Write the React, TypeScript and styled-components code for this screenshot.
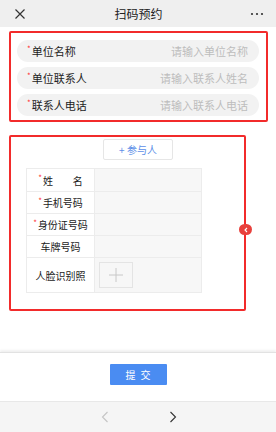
import React from "react";
import styled, { createGlobalStyle } from "styled-components";

const Global = createGlobalStyle`
  html, body { margin: 0; padding: 0; background: #fff; }
  body { font-family: "Noto Sans CJK SC", "Noto Sans", sans-serif; color: #333; }
  * { box-sizing: border-box; }
`;

const Page = styled.div`
  width: 276px;
  height: 432px;
  display: flex;
  flex-direction: column;
  overflow: hidden;
  background: #fff;
`;

const Header = styled.div`
  height: 27px;
  flex: none;
  background: #efefef;
  display: flex;
  align-items: center;
  justify-content: space-between;
  padding: 0 12px 0 13px;
`;

const Title = styled.div`
  font-size: 12px;
  color: #222;
  line-height: 1;
`;

const IconBox = styled.div`
  width: 14px;
  height: 14px;
  display: flex;
  align-items: center;
  justify-content: center;
`;

const Content = styled.div`
  flex: 1;
  display: flex;
  flex-direction: column;
  padding: 4px 8px 0 9px;
`;

const RedFrame = styled.div<{ $w: number }>`
  position: relative;
  width: ${(p) => p.$w}px;
  border: 2px solid #f22b2b;
  border-radius: 2px;
`;

const InfoFrame = styled(RedFrame)`
  height: 91px;
  padding: 7px 7px 0 6px;
  display: flex;
  flex-direction: column;
  gap: 5px;
`;

const Pill = styled.div`
  height: 22px;
  border-radius: 11px;
  background: #f2f2f2;
  display: flex;
  align-items: center;
  justify-content: space-between;
  padding: 0 11px 0 10px;
  font-size: 11px;
`;

const Label = styled.span`
  color: #222;
  display: flex;
  align-items: center;
`;

const Star = styled.span`
  color: #f33;
  font-size: 8px;
  line-height: 1;
  margin-right: 1px;
  position: relative;
  top: -2px;
`;

const Placeholder = styled.span`
  color: #bdbdbd;
`;

const PeopleFrame = styled(RedFrame)`
  margin-top: 13px;
  height: 176px;
  padding: 2px 0 0 15px;
  display: flex;
  flex-direction: column;
`;

const AddButton = styled.div`
  align-self: flex-start;
  margin-left: 77px;
  width: 70px;
  height: 21px;
  border: 1px solid #e6e6e6;
  border-radius: 2px;
  display: flex;
  align-items: center;
  justify-content: center;
  font-size: 10px;
  color: #5d8fe8;
  background: #fff;
`;

const Table = styled.div`
  margin-top: 8px;
  width: 176px;
  display: grid;
  grid-template-columns: 67px 1fr;
  border: 1px solid #ececec;
`;

const Cell = styled.div<{ $h: number; $value?: boolean; $last?: boolean }>`
  height: ${(p) => p.$h}px;
  background: ${(p) => (p.$value ? "#f7f7f7" : "#fff")};
  border-bottom: ${(p) => (p.$last ? "none" : "1px solid #ececec")};
  border-left: ${(p) => (p.$value ? "1px solid #ececec" : "none")};
  display: flex;
  align-items: center;
  justify-content: ${(p) => (p.$value ? "flex-start" : "center")};
  padding-left: ${(p) => (p.$value ? "4px" : "0")};
  font-size: 10px;
  color: #333;
`;

const UploadBox = styled.div`
  width: 34px;
  height: 26px;
  border: 1px solid #e4e4e4;
  display: flex;
  align-items: center;
  justify-content: center;
`;

const SideDot = styled.div`
  position: absolute;
  right: -8px;
  top: 87px;
  width: 13px;
  height: 11px;
  border-radius: 6px;
  background: #e8403c;
  display: flex;
  align-items: center;
  justify-content: center;
`;

const Footer = styled.div`
  height: 49px;
  flex: none;
  display: flex;
  align-items: flex-start;
  justify-content: center;
  padding-top: 11px;
  border-top: 1px solid #e2e2e2;
  box-shadow: 0 -2px 2px rgba(0, 0, 0, 0.06);
  background: #fff;
`;

const SubmitButton = styled.div`
  width: 57px;
  height: 21px;
  background: #4a8cf2;
  border-radius: 1px;
  color: #fff;
  font-size: 10px;
  letter-spacing: 5px;
  padding-left: 5px;
  display: flex;
  align-items: center;
  justify-content: center;
`;

const NavBar = styled.div`
  height: 31px;
  flex: none;
  background: #f5f5f5;
  border-top: 1px solid #e8e8e8;
  display: flex;
  align-items: center;
  justify-content: center;
  gap: 60px;
  padding-left: 2px;
`;

const rows: { label: string; star?: boolean; h: number }[] = [
  { label: "姓\u3000\u3000名", star: true, h: 23 },
  { label: "手机号码", star: true, h: 22 },
  { label: "身份证号码", star: true, h: 22 },
  { label: "车牌号码", h: 22 },
];

export default function App() {
  return (
    <Page>
      <Global />
      <Header>
        <IconBox>
          <svg width="12" height="12" viewBox="0 0 12 12">
            <path d="M1.5 1.5 L10.5 10.5 M10.5 1.5 L1.5 10.5" stroke="#333" strokeWidth="1.2" />
          </svg>
        </IconBox>
        <Title>扫码预约</Title>
        <IconBox>
          <svg width="14" height="4" viewBox="0 0 14 4">
            <circle cx="2" cy="2" r="1.1" fill="#333" />
            <circle cx="7" cy="2" r="1.1" fill="#333" />
            <circle cx="12" cy="2" r="1.1" fill="#333" />
          </svg>
        </IconBox>
      </Header>
      <Content>
        <InfoFrame $w={259}>
          <Pill>
            <Label><Star>*</Star>单位名称</Label>
            <Placeholder>请输入单位名称</Placeholder>
          </Pill>
          <Pill>
            <Label><Star>*</Star>单位联系人</Label>
            <Placeholder>请输入联系人姓名</Placeholder>
          </Pill>
          <Pill>
            <Label><Star>*</Star>联系人电话</Label>
            <Placeholder>请输入联系人电话</Placeholder>
          </Pill>
        </InfoFrame>
        <PeopleFrame $w={237}>
          <AddButton>+ 参与人</AddButton>
          <Table>
            {rows.map((r) => (
              <React.Fragment key={r.label}>
                <Cell $h={r.h}>
                  <Label>
                    {r.star && <Star>*</Star>}
                    {r.label}
                  </Label>
                </Cell>
                <Cell $h={r.h} $value />
              </React.Fragment>
            ))}
            <Cell $h={34} $last>
              <Label>人脸识别照</Label>
            </Cell>
            <Cell $h={34} $value $last>
              <UploadBox>
                <svg width="14" height="14" viewBox="0 0 14 14">
                  <path d="M7 0 V14 M0 7 H14" stroke="#c8c8c8" strokeWidth="1" />
                </svg>
              </UploadBox>
            </Cell>
          </Table>
          <SideDot>
            <svg width="6" height="6" viewBox="0 0 6 6">
              <path d="M4 1 L2 3 L4 5" stroke="#fff" strokeWidth="1.1" fill="none" />
            </svg>
          </SideDot>
        </PeopleFrame>
      </Content>
      <Footer>
        <SubmitButton>提交</SubmitButton>
      </Footer>
      <NavBar>
        <svg width="8" height="12" viewBox="0 0 8 12">
          <path d="M6.5 1 L1.5 6 L6.5 11" stroke="#c4c4c4" strokeWidth="1.1" fill="none" />
        </svg>
        <svg width="8" height="12" viewBox="0 0 8 12">
          <path d="M1.5 1 L6.5 6 L1.5 11" stroke="#333" strokeWidth="1.1" fill="none" />
        </svg>
      </NavBar>
    </Page>
  );
}
